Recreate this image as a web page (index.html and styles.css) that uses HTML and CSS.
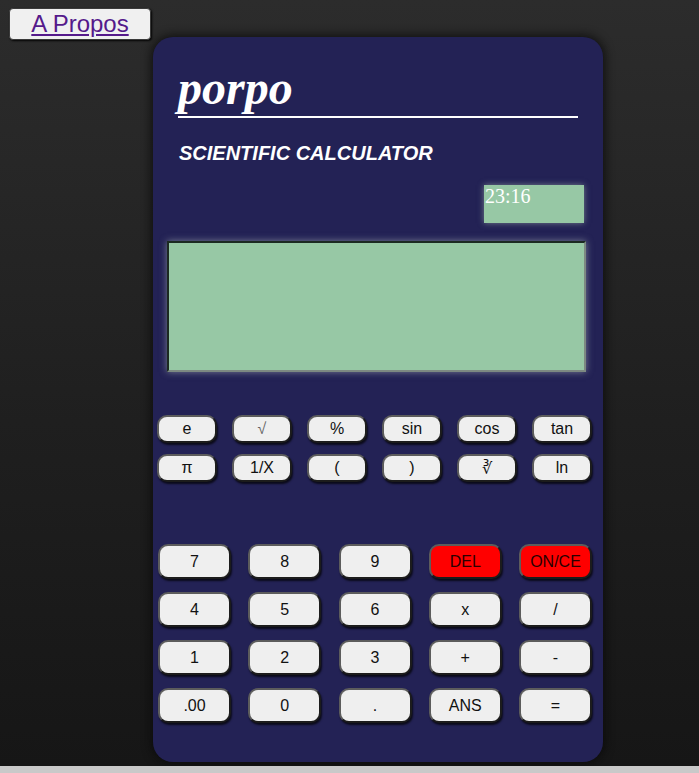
FILE: index.html
```html
<!DOCTYPE html>
<html lang="fr">
<head>
<meta charset="utf-8">
<title>porpo - Scientific Calculator</title>
<link rel="stylesheet" href="styles.css">
</head>
<body>
<div class="about"><a href="#">A Propos</a></div>
<main class="calc">
  <h1 class="brand">porpo</h1>
  <h2 class="subtitle">SCIENTIFIC CALCULATOR</h2>
  <div class="clock">23:16</div>
  <div class="screen"></div>
  <div class="sci-keys">
    <button class="key">e</button>
    <button class="key light">√</button>
    <button class="key">%</button>
    <button class="key">sin</button>
    <button class="key">cos</button>
    <button class="key">tan</button>
    <button class="key">π</button>
    <button class="key">1/X</button>
    <button class="key">(</button>
    <button class="key">)</button>
    <button class="key">∛</button>
    <button class="key">ln</button>
  </div>
  <div class="keys">
    <button class="key">7</button>
    <button class="key">8</button>
    <button class="key">9</button>
    <button class="key red">DEL</button>
    <button class="key red">ON/CE</button>
    <button class="key">4</button>
    <button class="key">5</button>
    <button class="key">6</button>
    <button class="key">x</button>
    <button class="key">/</button>
    <button class="key">1</button>
    <button class="key">2</button>
    <button class="key">3</button>
    <button class="key">+</button>
    <button class="key">-</button>
    <button class="key">.00</button>
    <button class="key">0</button>
    <button class="key">.</button>
    <button class="key">ANS</button>
    <button class="key">=</button>
  </div>
</main>
</body>
</html>
```
FILE: styles.css
```css
html {
  background: #c9c9c9;
}
body {
  margin: 0;
  height: 766px;
  box-sizing: border-box;
  padding-top: 37px;
  background: linear-gradient(180deg, #2c2c2c 0%, #1f1f1f 55%, #161616 100%);
  font-family: "Liberation Sans", Arial, sans-serif;
  position: relative;
  overflow: hidden;
}
.about {
  position: absolute;
  left: 9px;
  top: 8px;
  width: 142px;
  height: 32px;
  box-sizing: border-box;
  background: #f0f0f0;
  border: 1px solid #3a3a3a;
  border-radius: 4px;
  box-shadow: 1px 1px 2px rgba(0,0,0,0.9);
  text-align: center;
  font-size: 24px;
  line-height: 29px;
}
.about a {
  color: #551a8b;
  text-decoration: underline;
}
.calc {
  display: block;
  margin-left: 153px;
  width: 450px;
  height: 725px;
  box-sizing: border-box;
  background: #232255;
  border-radius: 20px;
  box-shadow: 0 0 10px 2px rgba(10,10,10,0.8);
  overflow: hidden;
}
.brand {
  margin: 23px 25px 0 25px;
  font-family: "Liberation Serif", "Times New Roman", serif;
  font-style: italic;
  font-weight: bold;
  font-size: 48px;
  line-height: 56px;
  color: #ffffff;
  border-bottom: 2px solid #ffffff;
}
.subtitle {
  margin: 24px 0 0 26px;
  font-family: "Liberation Sans", Arial, sans-serif;
  font-style: italic;
  font-weight: bold;
  font-size: 20px;
  line-height: 23px;
  color: #ffffff;
}
.clock {
  margin: 20px 0 0 331px;
  width: 100px;
  height: 38px;
  background: #97c8a5;
  box-shadow: 0 0 6px rgba(170,190,175,0.6);
  color: #ffffff;
  font-family: "Liberation Serif", "Times New Roman", serif;
  font-size: 20px;
  line-height: 23px;
  padding-left: 1px;
  box-sizing: border-box;
}
.screen {
  margin: 18px 0 0 14px;
  width: 419px;
  height: 131px;
  box-sizing: border-box;
  background: #97c8a5;
  border: 2px solid;
  border-color: #1c2a22 #7d8a82 #7d8a82 #1c2a22;
  box-shadow: 0 0 7px rgba(190,200,195,0.55);
}
.sci-keys {
  display: grid;
  grid-template-columns: repeat(6, 60px);
  grid-auto-rows: 28px;
  gap: 11px 15px;
  margin: 43px 0 0 4px;
}
.keys {
  display: grid;
  grid-template-columns: repeat(5, 73px);
  grid-auto-rows: 35px;
  gap: 13px 17.25px;
  margin: 62px 0 0 5px;
}
.key {
  width: 100%;
  height: 100%;
  margin: 0;
  padding: 0;
  background: #efefef;
  border: 2px solid;
  border-color: #5c5c5c #1c1c1c #1c1c1c #5c5c5c;
  border-radius: 10px;
  box-shadow: 1px 2px 2px rgba(0,0,0,0.7);
  font-family: "Liberation Sans", Arial, sans-serif;
  font-size: 16px;
  color: #111111;
}
.key.light {
  color: #666666;
}
.key.red {
  background: #ff0000;
  color: #2a0000;
}
```
